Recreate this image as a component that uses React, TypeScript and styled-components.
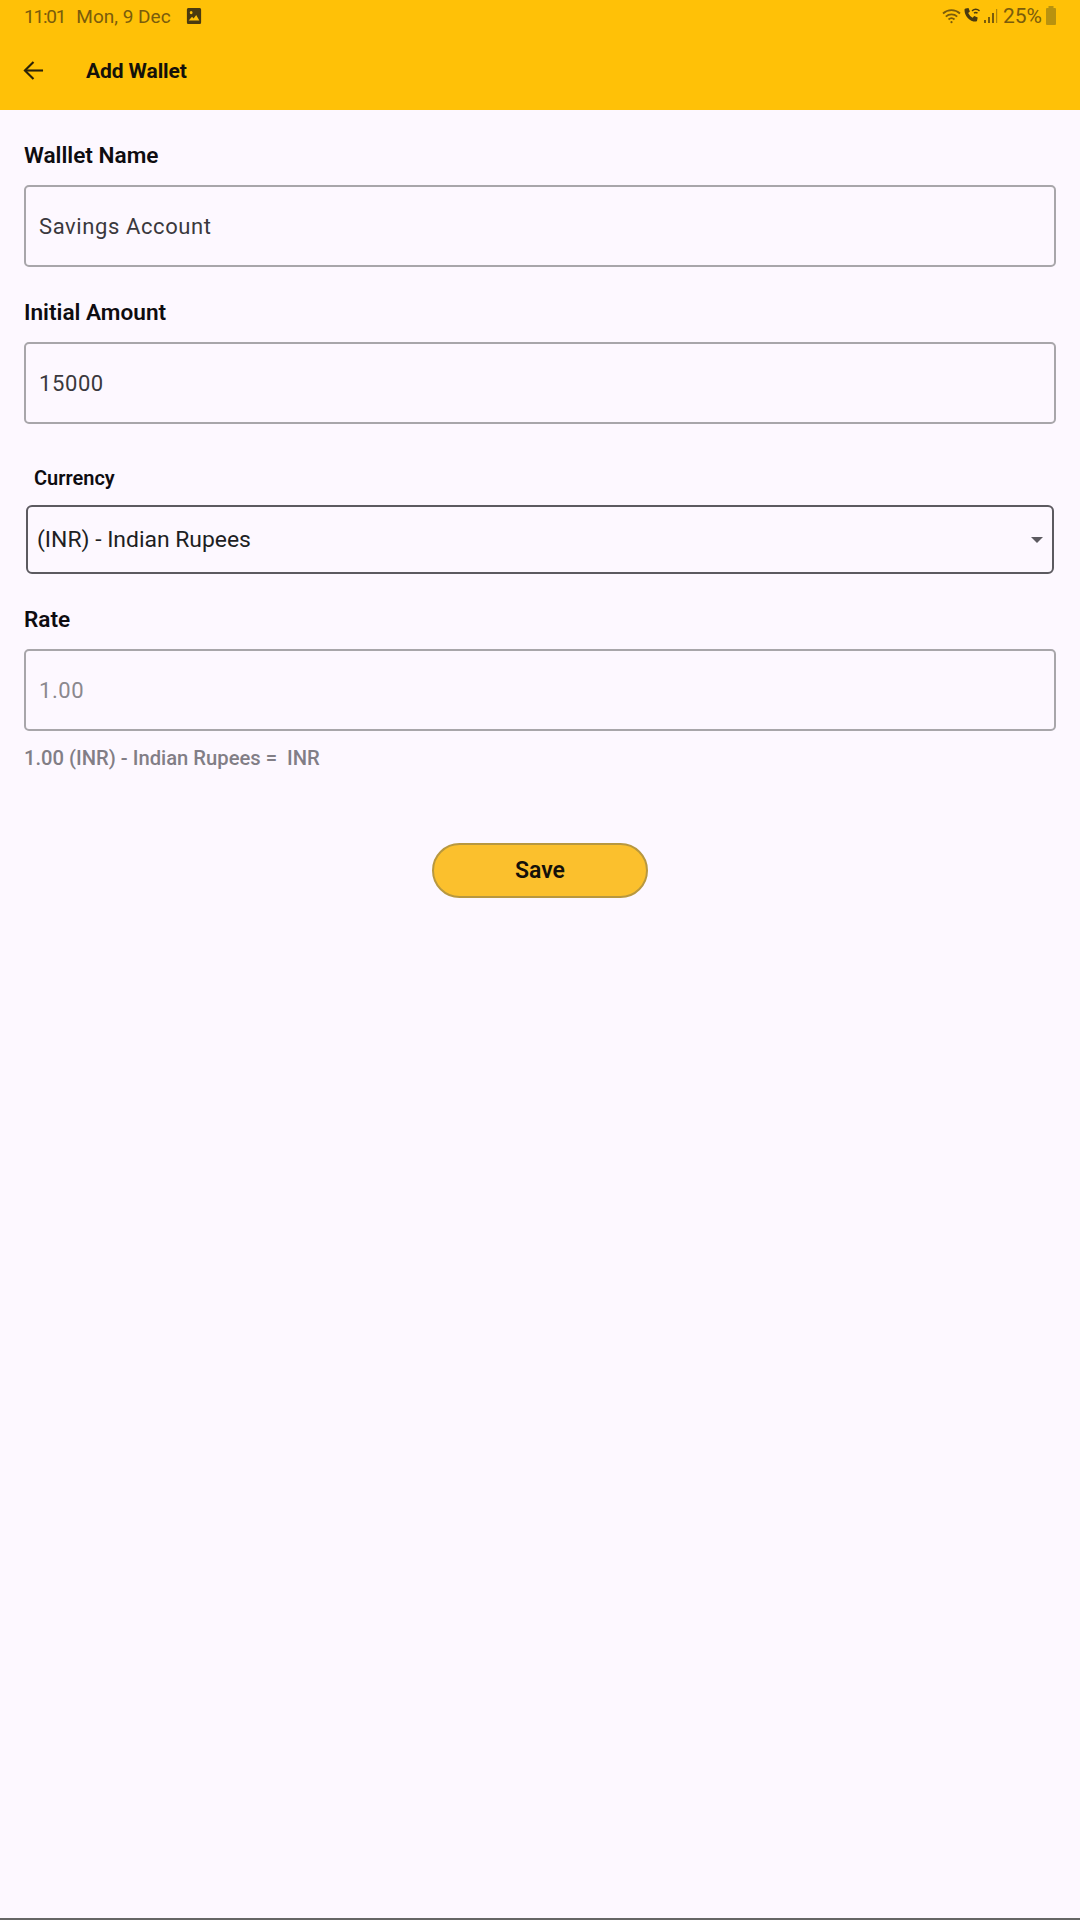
import React from 'react'
import styled, { createGlobalStyle } from 'styled-components'

const GlobalStyle = createGlobalStyle`
  html, body {
    margin: 0;
    padding: 0;
    background: #fdf8ff;
  }
  * {
    box-sizing: border-box;
  }
`

const Page = styled.div`
  width: 1080px;
  height: 1920px;
  display: flex;
  flex-direction: column;
  background: #fdf8ff;
  font-family: 'Roboto', 'Liberation Sans', sans-serif;
`

const Header = styled.header`
  height: 110px;
  flex-shrink: 0;
  background: #ffc107;
`

const StatusBar = styled.div`
  height: 32px;
  padding: 0 23px 0 24px;
  display: flex;
  align-items: center;
  justify-content: space-between;
  color: #7a5c0c;
  font-size: 19px;
`

const StatusGroup = styled.div`
  display: flex;
  align-items: center;
`

const Clock = styled.span`
  margin-right: 11px;
  letter-spacing: -1.2px;
`

const DateText = styled.span`
  margin-right: 15px;
`

const Battery = styled.span`
  font-size: 21px;
  margin: 0 3px 0 1px;
`

const AppBar = styled.div`
  height: 78px;
  padding: 0 0 1px 23px;
  display: flex;
  align-items: center;
`

const Title = styled.h1`
  margin: 0 0 0 42px;
  font-size: 21px;
  font-weight: 700;
  letter-spacing: -0.1px;
  color: #14110a;
`

const Form = styled.main`
  padding: 0 24px;
  display: flex;
  flex-direction: column;
`

const Label = styled.label<{ $top: number }>`
  display: block;
  margin-top: ${(p) => p.$top}px;
  height: 34px;
  line-height: 34px;
  font-size: 22.6px;
  font-weight: 600;
  color: #0e0c10;
`

const InputBox = styled.div<{ $muted?: boolean }>`
  height: 82px;
  margin-top: 12px;
  padding: 0 13px;
  display: flex;
  align-items: center;
  border: 2px solid #a8a6aa;
  border-radius: 5px;
  font-size: 22px;
  letter-spacing: 0.6px;
  color: ${(p) => (p.$muted ? '#8b888e' : '#3a383d')};
`

const CurrencyLabel = styled.label`
  display: block;
  margin: 39px 0 0 10px;
  height: 30px;
  line-height: 30px;
  font-size: 20px;
  font-weight: 600;
  color: #0e0c10;
`

const Select = styled.div`
  height: 69px;
  margin: 12px 2px 0;
  padding: 0 9px;
  display: flex;
  align-items: center;
  justify-content: space-between;
  border: 2px solid #5c5a60;
  border-radius: 6px;
  font-size: 22.9px;
  color: #201e23;
`

const Caret = styled.span`
  width: 0;
  height: 0;
  margin-right: 0;
  border-left: 6px solid transparent;
  border-right: 6px solid transparent;
  border-top: 6px solid #5c5a60;
`

const Helper = styled.p`
  margin: 12px 0 0;
  height: 30px;
  line-height: 30px;
  font-size: 20.2px;
  font-weight: 500;
  color: #827e86;
`

const SaveButton = styled.button`
  width: 216px;
  height: 55px;
  margin: 70px auto 0;
  display: block;
  padding: 0;
  background: #fbc02d;
  border: 2px solid #b8983f;
  border-radius: 28px;
  font-family: inherit;
  font-size: 23px;
  font-weight: 600;
  color: #14110a;
`

const BottomEdge = styled.div`
  height: 2px;
  margin-top: auto;
  background: #666666;
`

const ImageIcon = () => (
  <svg width="16" height="18" viewBox="0 0 18 18" preserveAspectRatio="none">
    <path
      fill="#4a3a10"
      fillRule="evenodd"
      d="M2.5 1h13A1.5 1.5 0 0 1 17 2.5v13a1.5 1.5 0 0 1-1.5 1.5h-13A1.5 1.5 0 0 1 1 15.5v-13A1.5 1.5 0 0 1 2.5 1ZM3 13.5h12L11.5 8 8.5 11.5 6.8 9.8ZM5.8 4a1.6 1.6 0 1 0 0 3.2 1.6 1.6 0 0 0 0-3.2Z"
    />
  </svg>
)

const WifiIcon = () => (
  <svg width="20" height="18" viewBox="0 0 20 18" fill="none" stroke="#7a5c0c" strokeWidth="1.8">
    <path d="M1 6.5a12.5 12.5 0 0 1 17 0" />
    <path d="M3.8 9.6a8.5 8.5 0 0 1 11.4 0" />
    <path d="M6.5 12.5a4.5 4.5 0 0 1 6 0" />
    <circle cx="9.5" cy="15.2" r="1.1" fill="#7a5c0c" stroke="none" />
  </svg>
)

const CallIcon = () => (
  <svg width="20" height="18" viewBox="0 0 20 18">
    <path
      fill="#4a3a10"
      d="M3.6 1.6 6.5 1l1.4 3.6-1.7 1.5a9.5 9.5 0 0 0 4.4 4.6l1.6-1.6 3.5 1.5-.6 3c-.1.6-.7 1-1.3 1C7.400 14.400 2.500 9 2.500 2.900c0-.6.5-1.200 1.100-1.300Z"
    />
    <path fill="none" stroke="#4a3a10" strokeWidth="1.500" d="M10 3.800a6 6 0 0 1 7.500 0M12 6.200a3 3 0 0 1 3.500 0" />
  </svg>
)

const SignalIcon = () => (
  <svg width="20" height="18" viewBox="0 0 20 18" fill="#7a5c0c">
    <rect x="2" y="13" width="2" height="3" />
    <rect x="6" y="10" width="2" height="6" />
    <rect x="10" y="6" width="2" height="10" />
    <rect x="14" y="2" width="1.200" height="14" opacity="0.6" />
  </svg>
)

const BatteryIcon = () => (
  <svg width="12" height="20" viewBox="0 0 12 20" fill="#b8920f">
    <rect x="3.500" y="0" width="5" height="2" />
    <rect x="1" y="2" width="10" height="17" rx="1" />
  </svg>
)

const BackIcon = () => (
  <svg width="21" height="21" viewBox="0 0 22 22" fill="none" stroke="#2b2208" strokeWidth="2.200">
    <path d="M21 11H2" />
    <path d="M11 2 2 11l9 9" />
  </svg>
)

const App = () => (
  <Page>
    <GlobalStyle />
    <Header>
      <StatusBar>
        <StatusGroup>
          <Clock>11:01</Clock>
          <DateText>Mon, 9 Dec</DateText>
          <ImageIcon />
        </StatusGroup>
        <StatusGroup>
          <WifiIcon />
          <CallIcon />
          <SignalIcon />
          <Battery>25%</Battery>
          <BatteryIcon />
        </StatusGroup>
      </StatusBar>
      <AppBar>
        <BackIcon />
        <Title>Add Wallet</Title>
      </AppBar>
    </Header>
    <Form>
      <Label $top={29}>Walllet Name</Label>
      <InputBox>Savings Account</InputBox>
      <Label $top={29}>Initial Amount</Label>
      <InputBox>15000</InputBox>
      <CurrencyLabel>Currency</CurrencyLabel>
      <Select>
        (INR) - Indian Rupees
        <Caret />
      </Select>
      <Label $top={29}>Rate</Label>
      <InputBox $muted>1.00</InputBox>
      <Helper>1.00 (INR) - Indian Rupees =&nbsp; INR</Helper>
      <SaveButton>Save</SaveButton>
    </Form>
    <BottomEdge />
  </Page>
)

export default App
